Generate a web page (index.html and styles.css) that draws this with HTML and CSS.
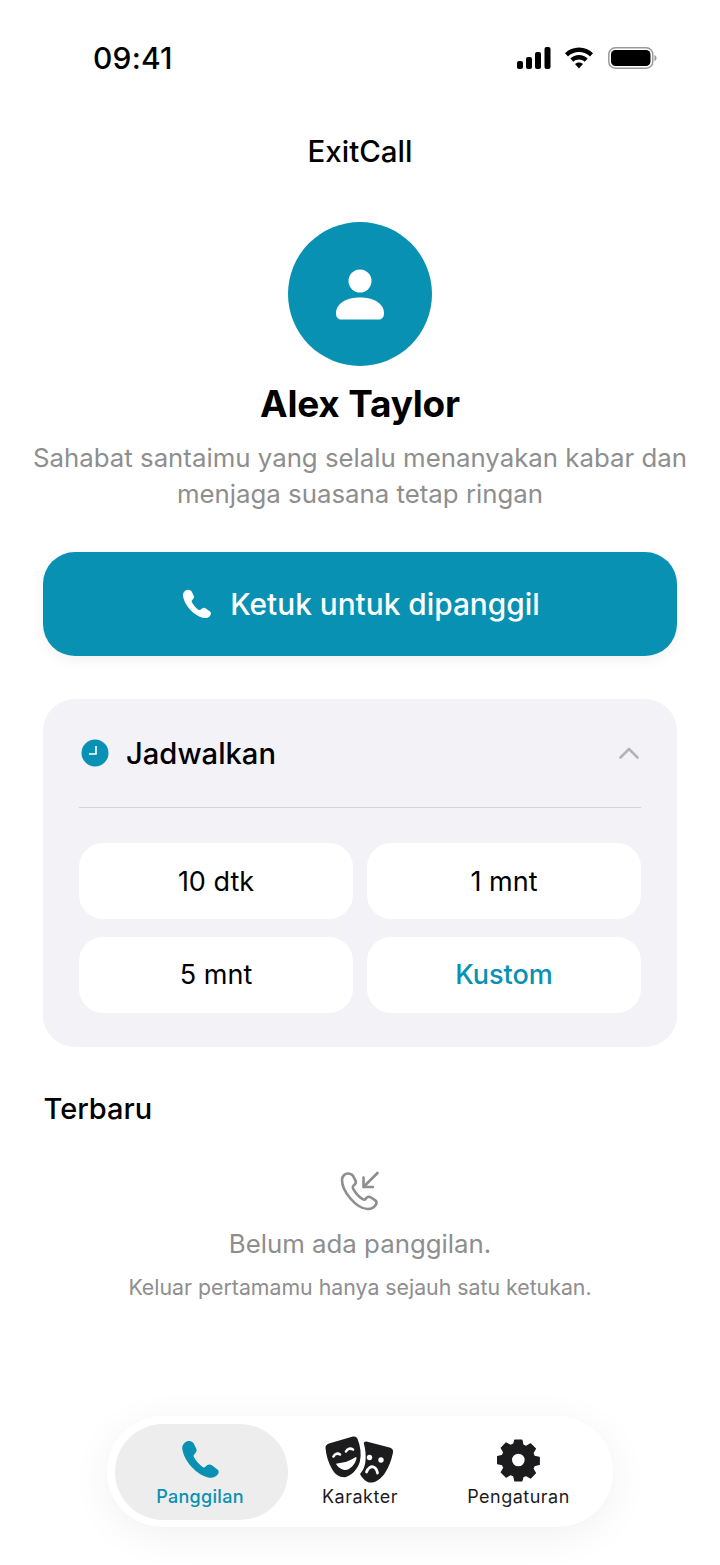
FILE: index.html
```html
<!DOCTYPE html>
<html lang="id">
<head>
<meta charset="utf-8">
<title>ExitCall</title>
<link rel="stylesheet" href="styles.css">
</head>
<body>
<div class="page">
  <div class="status">
    <span class="time">09:41</span>
    <div class="status-icons">
      <svg class="sig" width="36" height="22" viewBox="0 0 36 22"><rect x="1" y="14" width="6" height="8" rx="2"/><rect x="10" y="10" width="6" height="12" rx="2"/><rect x="19" y="5" width="6" height="17" rx="2"/><rect x="28.500" y="0" width="6" height="22" rx="2"/></svg>
      <svg class="wifi" width="30" height="22" viewBox="0 0 30 22"><path d="M15 0.500C9.500 0.500 4.600 2.700 1 6.300L4 9.500C6.800 6.700 10.700 5 15 5s8.200 1.700 11 4.500l3-3.200C25.400 2.700 20.500 0.500 15 0.500z"/><path d="M15 8C11.600 8 8.600 9.300 6.300 11.500l3 3.200C10.800 13.300 12.800 12.400 15 12.400s4.200 0.900 5.700 2.300l3-3.200C21.400 9.300 18.400 8 15 8z"/><path d="M15 15.500c-1.600 0-3 0.600-4 1.600L15 21.500l4-4.400c-1-1-2.400-1.600-4-1.600z"/></svg>
      <svg class="batt" width="49" height="24" viewBox="0 0 49 24"><rect x="0.800" y="1.800" width="44" height="20.400" rx="6.500" fill="none" stroke="#9a9a9e" stroke-width="1.500"/><rect x="3" y="4" width="39.500" height="16" rx="4.500" fill="#000"/><path d="M46.500 9c1.300 0.400 2 1.500 2 3s-0.700 2.600-2 3z" fill="#9a9a9e"/></svg>
    </div>
  </div>

  <h1 class="title">ExitCall</h1>

  <div class="avatar">
    <svg width="50" height="52" viewBox="0 0 50 52"><circle cx="25" cy="12" r="11.500" fill="#fff"/><path d="M1 44.500C1 34 12 28.500 25 28.500S49 34 49 44.500C49 48 47 50.500 44 50.500H6C3 50.500 1 48 1 44.500z" fill="#fff"/></svg>
  </div>
  <h2 class="name">Alex Taylor</h2>
  <p class="desc">Sahabat santaimu yang selalu menanyakan kabar dan menjaga suasana tetap ringan</p>

  <button class="call">
    <svg width="30" height="30" viewBox="0 0 30 30"><path class="phone-white" d="M7.200 0.900C5.800 0.400 4.200 0.900 3 1.900 1.500 3.200 0.700 5 1 7c0.500 3.700 2.600 8.500 6.500 13 4.500 5 9.400 8.200 14.500 9 2.600 0.400 4.900-0.600 6.300-2.600 0.900-1.300 1-2.800-0.300-3.800l-4.500-3.300c-1.100-0.800-2.500-0.700-3.500 0.200l-1.500 1.300c-0.500 0.400-1.100 0.400-1.600 0.100-2.800-1.800-5.600-5-7.100-8-0.300-0.600-0.100-1.200 0.300-1.700l1.200-1.400c0.800-1 0.900-2.300 0.300-3.400L9.700 2.500C9.100 1.600 8.200 1.200 7.200 0.900z"/></svg>
    <span>Ketuk untuk dipanggil</span>
  </button>

  <section class="card">
    <div class="card-head">
      <div class="head-left">
        <svg class="clock" width="28" height="28" viewBox="0 0 28 28"><circle cx="14" cy="14" r="13.500" fill="#0891b2"/><path d="M15 7v8H8" fill="none" stroke="#fff" stroke-width="1.600"/></svg>
        <span class="card-title">Jadwalkan</span>
      </div>
      <svg class="chev" width="20" height="14" viewBox="0 0 20 14"><path d="M1.500 11.500L10 3l8.500 8.500" fill="none" stroke="#b4b4b8" stroke-width="2.600" stroke-linecap="round" stroke-linejoin="round"/></svg>
    </div>
    <div class="opts">
      <button class="opt">10 dtk</button>
      <button class="opt">1 mnt</button>
      <button class="opt">5 mnt</button>
      <button class="opt opt-accent">Kustom</button>
    </div>
  </section>

  <h3 class="recent">Terbaru</h3>
  <div class="empty">
    <svg width="40" height="40" viewBox="0 0 40 40" fill="none" stroke="#8e8e8e" stroke-width="2.600" stroke-linecap="round" stroke-linejoin="round"><path d="M8 2.500C5 2.500 2 5 2 9c0 5.500 3 12 8 18s12 11 18 11c3.500 0 6.500-2 8-4.500 1-1.800 0.500-3.300-1-4.300l-4-2.700c-1.500-1-3-1-4.200 0.200l-1.300 1.300c-0.800 0.800-1.800 0.800-2.800 0.200-4-2.600-7.600-6.700-9.700-10.900-0.500-1-0.300-1.900 0.500-2.700l1.200-1.100c1.300-1.200 1.500-2.600 0.700-4.200l-2.400-4.500C11.900 3.300 10 2.500 8 2.500z"/><path d="M37.500 2L23.500 16M23.500 6.500V16H33"/></svg>
    <p class="empty-main">Belum ada panggilan.</p>
    <p class="empty-sub">Keluar pertamamu hanya sejauh satu ketukan.</p>
  </div>

  <nav class="tabs">
    <div class="tab tab-active">
      <div class="tab-icon">
        <svg width="39" height="39" viewBox="0 0 30 30"><path class="phone-teal" d="M7.200 0.900C5.800 0.400 4.200 0.900 3 1.900 1.500 3.200 0.700 5 1 7c0.500 3.700 2.600 8.500 6.500 13 4.500 5 9.400 8.200 14.500 9 2.600 0.400 4.900-0.600 6.300-2.600 0.900-1.300 1-2.800-0.300-3.800l-4.500-3.300c-1.100-0.800-2.500-0.700-3.500 0.200l-1.500 1.300c-0.500 0.400-1.100 0.400-1.600 0.100-2.800-1.800-5.600-5-7.100-8-0.300-0.600-0.100-1.200 0.300-1.700l1.200-1.400c0.800-1 0.900-2.300 0.300-3.400L9.700 2.500C9.100 1.600 8.200 1.200 7.200 0.900z"/></svg>
      </div>
      <span class="tab-label">Panggilan</span>
    </div>
    <div class="tab tab-mid">
      <div class="tab-icon">
        <svg width="70" height="48" viewBox="0 0 70 48">
          <path fill="#1c1c1e" d="M41.500 5.500L64.500 11.500C67 12.200 68.500 14 68 16.500C66.500 24 64 31 60 37C55.500 43.500 50 47 44.500 46.500C41 46 37.500 42.500 35 38C38.500 34 40 30 40.500 25C41 19 40.500 13 38.800 7.500C39 6 40 5.200 41.500 5.500Z"/>
          <circle cx="44.500" cy="21.500" r="2.700" fill="#fff"/>
          <circle cx="56" cy="24" r="2.700" fill="#fff"/>
          <path d="M41.500 36C43 32 46 30 48.500 31C50.500 31.800 52 34 52.500 37" fill="none" stroke="#fff" stroke-width="2.800" stroke-linecap="round"/>
          <path fill="#1c1c1e" d="M4 7.500L27 .8C30 0 32 1 32.800 3.500C35.500 11 36.500 18 35 25C33 33 27 39 21 41C16 42 10 39 7 33C3.500 27 1 19 .5 12C.3 9.800 1.800 8.100 4 7.500Z"/>
          <path d="M8.500 20.500C10 17.500 13 17 15 18.500M21 15.500C22.500 12.500 25.500 12 28 13.500" fill="none" stroke="#fff" stroke-width="2.600" stroke-linecap="round"/>
          <path fill="#fff" d="M12 27.500C18 27 25 25 30 21.500C31 21 31.800 21.500 31.500 22.500C30 29 25 33.500 20.500 34C17 34.300 13.500 31.500 11.500 28.800C11 28 11.300 27.500 12 27.500Z"/>
        </svg>
      </div>
      <span class="tab-label">Karakter</span>
    </div>
    <div class="tab">
      <div class="tab-icon">
        <svg width="44" height="44" viewBox="0 0 44 44"><path fill="#1c1c1e" stroke="#1c1c1e" stroke-width="1.500" stroke-linejoin="round" fill-rule="evenodd" d="M18 .5h8l1.300 5.800c1.300.4 2.500.9 3.600 1.600l5.100-3 5.600 5.600-3 5.100c.6 1.100 1.200 2.300 1.600 3.600l5.800 1.300v8l-5.800 1.300c-.4 1.300-.9 2.500-1.600 3.600l3 5.100-5.600 5.600-5.100-3c-1.100.6-2.300 1.200-3.600 1.600L26 47.500h-8l-1.300-5.800c-1.300-.4-2.500-.9-3.600-1.600L8 43.100 2.400 37.500l3-5.100C4.800 31.300 4.200 30.100 3.800 28.800L-2 27.500v-8l5.800-1.300c.4-1.300.9-2.500 1.600-3.600l-3-5.100L8 3.900l5.100 3c1.100-.6 2.300-1.200 3.600-1.600L18 .5zM22 15.500a8 8 0 1 0 0 16 8 8 0 0 0 0-16z" transform="translate(2.200 1.600) scale(.87)"/></svg>
      </div>
      <span class="tab-label">Pengaturan</span>
    </div>
  </nav>
</div>
</body>
</html>
```

FILE: styles.css
```css
* { box-sizing: border-box; }
html, body { margin: 0; padding: 0; background: #fff; }
body { font-family: Inter, "Liberation Sans", sans-serif; color: #000; }
button { font-family: inherit; border: 0; }
p, h1, h2, h3 { margin: 0; }

.page {
  width: 720px;
  height: 1565px;
  display: flex;
  flex-direction: column;
  align-items: center;
  overflow: hidden;
}

.status {
  width: 100%;
  height: 116px;
  padding: 0 63px 0 93px;
  display: flex;
  justify-content: space-between;
  align-items: flex-start;
}
.time { font-size: 30px; font-weight: 500; line-height: 38px; margin-top: 39px; letter-spacing: 0.200px; }
.status-icons { display: flex; align-items: center; gap: 12px; margin-top: 46px; }
.batt { margin-left: 2px; }

.title { font-size: 29.500px; font-weight: 500; line-height: 36px; margin-top: 17px; }

.avatar {
  width: 144px;
  height: 144px;
  border-radius: 50%;
  background: #0891b2;
  margin-top: 53px;
  padding-top: 2px;
  display: flex;
  align-items: center;
  justify-content: center;
}
.name { font-size: 37px; font-weight: 700; line-height: 44px; margin-top: 16px; letter-spacing: -0.200px; }
.desc {
  font-size: 25.800px;
  line-height: 36px;
  color: #8e8e8e;
  text-align: center;
  margin-top: 14px;
  width: 670px;
}

.call {
  width: 634px;
  height: 104px;
  border-radius: 32px;
  background: #0891b2;
  color: #fff;
  margin-top: 40px;
  padding-left: 8px;
  display: flex;
  align-items: center;
  justify-content: center;
  gap: 18px;
  font-size: 29.800px;
  font-weight: 500;
  box-shadow: 0 4px 14px rgba(0, 0, 0, 0.06);
}
.phone-white { fill: #fff; }
.phone-teal { fill: #0891b2; }

.card {
  width: 634px;
  height: 348px;
  border-radius: 32px;
  background: #f2f2f7;
  margin-top: 43px;
  padding: 0 36px;
}
.card-head {
  height: 109px;
  display: flex;
  align-items: center;
  justify-content: space-between;
  border-bottom: 1px solid #d4d4d8;
  padding: 0 2px 0 2px;
}
.head-left { display: flex; align-items: center; gap: 17px; }
.card-title { font-size: 29.200px; font-weight: 500; }

.opts {
  display: grid;
  grid-template-columns: 274px 274px;
  grid-auto-rows: 76px;
  column-gap: 14px;
  row-gap: 17.500px;
  margin-top: 35px;
}
.opt {
  background: #fff;
  border-radius: 24px;
  font-size: 27px;
  font-weight: 400;
  color: #000;
}
.opt-accent { color: #0891b2; font-weight: 500; }

.recent {
  align-self: flex-start;
  margin: 44px 0 0 43.500px;
  font-size: 29px;
  font-weight: 500;
  line-height: 36px;
}

.empty { display: flex; flex-direction: column; align-items: center; margin-top: 44px; }
.empty-main { font-size: 25.800px; line-height: 34px; color: #8e8e8e; margin-top: 16px; }
.empty-sub { font-size: 21.300px; line-height: 28px; color: #8e8e8e; margin-top: 12px; }

.tabs {
  width: 506px;
  height: 111px;
  border-radius: 56px;
  background: #fff;
  margin-top: auto;
  margin-bottom: 38px;
  padding: 8px;
  display: flex;
  align-items: center;
  box-shadow: 0 8px 40px rgba(0, 0, 0, 0.06);
}
.tab {
  width: 173px;
  height: 96px;
  flex: none;
  display: flex;
  flex-direction: column;
  align-items: center;
  padding-top: 10px;
  font-size: 18px;
  font-weight: 400;
  color: #1c1c1e;
  letter-spacing: 0.500px;
}
.tab-mid { width: 144px; }
.tab-icon {
  height: 52px;
  display: flex;
  align-items: center;
  justify-content: center;
}
.tab-label { line-height: 22px; }
.tab-active {
  border-radius: 48px;
  background: #ededee;
  color: #0891b2;
  font-weight: 500;
  letter-spacing: 0.300px;
  padding-right: 3px;
}
```
